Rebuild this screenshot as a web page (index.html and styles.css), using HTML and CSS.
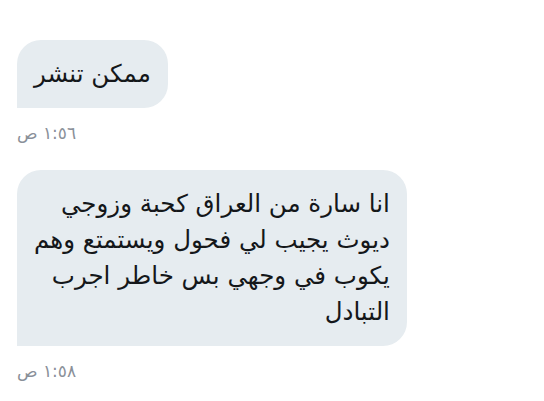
FILE: index.html
```html
<!DOCTYPE html>
<html lang="ar">
<head>
  <meta charset="utf-8">
  <meta name="viewport" content="width=device-width">
  <link rel="stylesheet" href="styles.css">
  <title>رسائل</title>
</head>
<body>
  <main class="chat">
    <div class="msg">
      <div class="bubble" dir="rtl">ممكن تنشر</div>
      <div class="time"><span dir="rtl">١:٥٦ ص</span></div>
    </div>
    <div class="msg">
      <div class="bubble" dir="rtl">انا سارة من العراق كحبة وزوجي<br>ديوث يجيب لي فحول ويستمتع وهم<br>يكوب في وجهي بس خاطر اجرب<br>التبادل</div>
      <div class="time"><span dir="rtl">١:٥٨ ص</span></div>
    </div>
  </main>
</body>
</html>
```

FILE: styles.css
```css
body {
  margin: 0;
  background-color: #ffffff;
  font-family: "DejaVu Sans", sans-serif;
}
.chat {
  display: flex;
  flex-direction: column;
  gap: 26px;
  padding: 40px 0 0 17px;
}
.msg {
  display: flex;
  flex-direction: column;
  align-items: flex-start;
}
.bubble {
  background-color: #e6ecf0;
  color: #14171a;
  font-size: 24.5px;
  line-height: 36px;
  padding: 16px 17px;
  border-radius: 24px 24px 24px 0;
  text-align: right;
}
.time {
  margin-top: 14px;
  font-size: 17px;
  line-height: 22px;
  color: #8a9099;
}
```
